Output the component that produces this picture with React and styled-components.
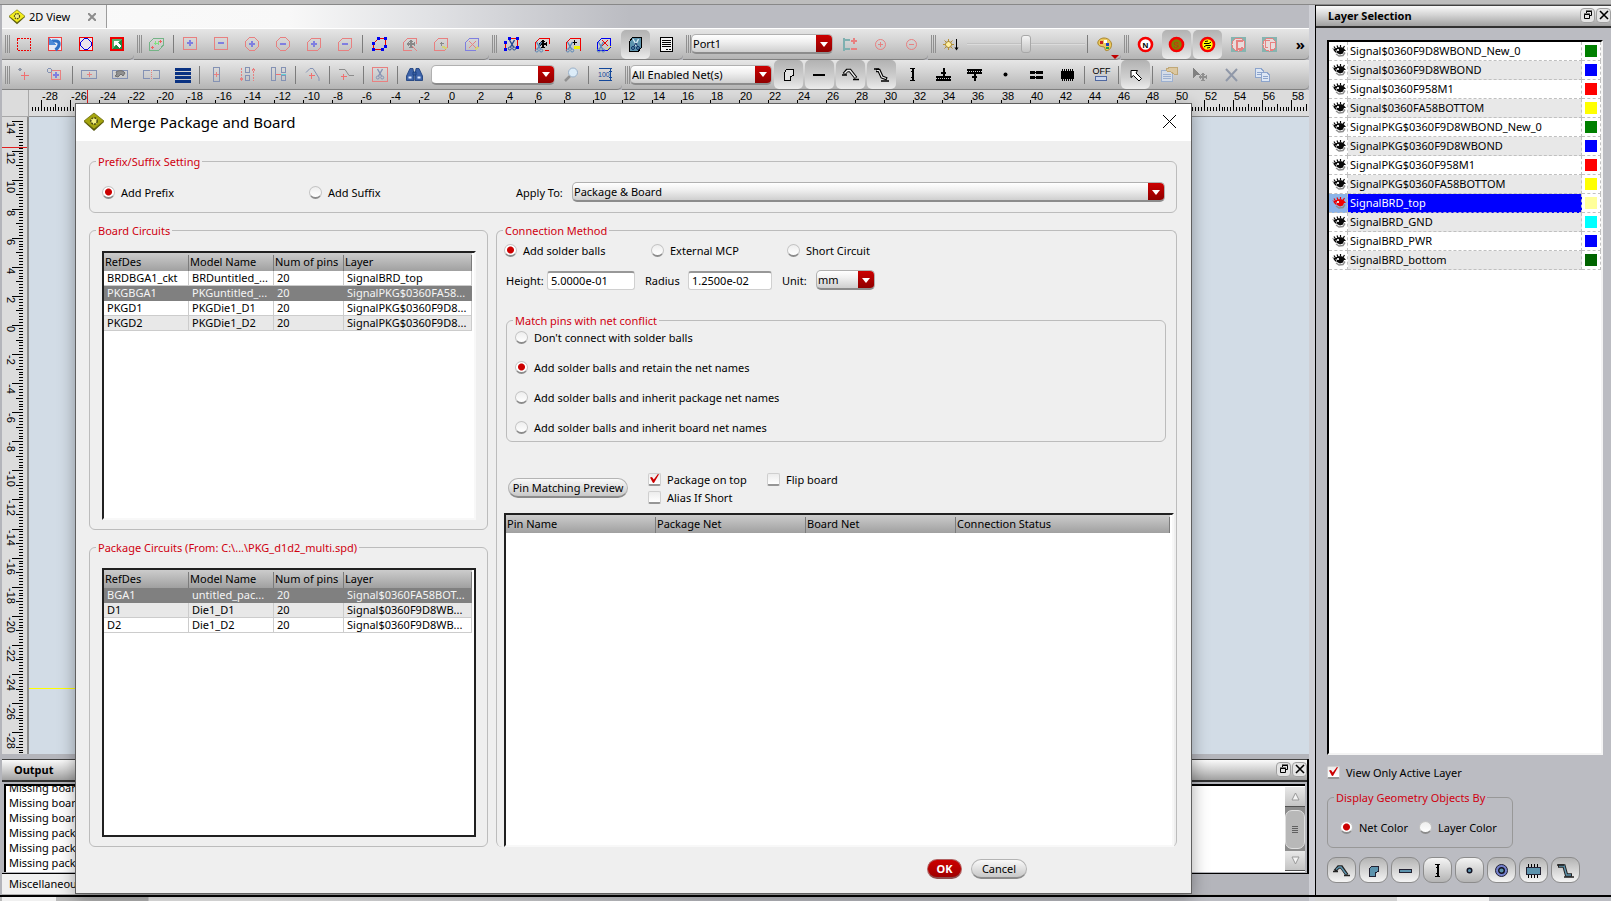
import React, { useState } from 'react';
import styled, { createGlobalStyle, css } from 'styled-components';

const RED = '#f00000';
const SOFT_RED = '#e88080';
const SOFT_BLUE = '#7f7fe0';
const STEEL = '#8492b4';
const TEAL = '#5c93ad';

const boardRows = [
    ['BRDBGA1_ckt', 'BRDuntitled_...', '20', 'SignalBRD_top'],
    ['PKGBGA1', 'PKGuntitled_...', '20', 'SignalPKG$0360FA58...'],
    ['PKGD1', 'PKGDie1_D1', '20', 'SignalPKG$0360F9D8...'],
    ['PKGD2', 'PKGDie1_D2', '20', 'SignalPKG$0360F9D8...'],
];

const packageRows = [
    ['BGA1', 'untitled_pac...', '20', 'Signal$0360FA58BOT...'],
    ['D1', 'Die1_D1', '20', 'Signal$0360F9D8WB...'],
    ['D2', 'Die1_D2', '20', 'Signal$0360F9D8WB...'],
];

const layers = [
    { name: 'Signal$0360F9D8WBOND_New_0', color: '#008000' },
    { name: 'Signal$0360F9D8WBOND', color: '#0000ff' },
    { name: 'Signal$0360F958M1', color: '#ff0000' },
    { name: 'Signal$0360FA58BOTTOM', color: '#ffff00' },
    { name: 'SignalPKG$0360F9D8WBOND_New_0', color: '#008000' },
    { name: 'SignalPKG$0360F9D8WBOND', color: '#0000ff' },
    { name: 'SignalPKG$0360F958M1', color: '#ff0000' },
    { name: 'SignalPKG$0360FA58BOTTOM', color: '#ffff00' },
    { name: 'SignalBRD_top', color: '#ffff99' },
    { name: 'SignalBRD_GND', color: '#00ffff' },
    { name: 'SignalBRD_PWR', color: '#0000ff' },
    { name: 'SignalBRD_bottom', color: '#006400' },
];

const messages = [
    'Missing board circuit',
    'Missing board circuit',
    'Missing board circuit',
    'Missing package circuit',
    'Missing package circuit',
    'Missing package circuit',
];

const conflictOptions = [
    "Don't connect with solder balls",
    'Add solder balls and retain the net names',
    'Add solder balls and inherit package net names',
    'Add solder balls and inherit board net names',
];

/* ---------- toolbar drawings, all on a 15 x 15 grid ---------- */

const CUT = 'M4.5 1.5H13.5V10.5L10.5 13.5H.5V5.5Z';
const OCTAGON = 'M4.5 .5H9.5L13.5 4.5V9.5L9.5 13.5H4.5L.5 9.5V4.5Z';

const Plus = ({ x = 7, y = 7, r = 3, c = SOFT_BLUE, w = 2 }) => (
    <path d={`M${x - r} ${y}H${x + r}M${x} ${y - r}V${y + r}`} stroke={c} strokeWidth={w} />
);
const Minus = () => <path d='M4 7H10' stroke={SOFT_BLUE} strokeWidth='2' />;
const Scissors = ({ c = '#244a90', x = 0, y = 0 }) => (
    <g transform={`translate(${x} ${y})`} stroke={c} fill='none' shapeRendering='auto'>
        <path d='M1.5 0L5.5 7M6.5 0L2.5 7' strokeWidth='1.4' />
        <circle cx='1.8' cy='8.5' r='1.5' />
        <circle cx='6.2' cy='8.5' r='1.5' />
    </g>
);
const MoveCross = ({ c, x = 8, y = 7 }) => (
    <g transform={`translate(${x} ${y})`}>
        <path d='M-4 0H4M0 -4V4' stroke={c} strokeWidth='2' />
        <path d='M-2 -3H2M-2 3H2M-3 -2V2M3 -2V2' stroke={c} />
    </g>
);
const Nodes = ({ points, c = '#0000f0' }) => points.map(([x, y]) => (
    <rect key={`${x}-${y}`} x={x - 1} y={y - 1} width='3' height='3' fill={c} />
));
const Ring = ({ fill, children }) => (
    <g shapeRendering='auto'>
        <circle cx='7.5' cy='7.5' r='6.5' fill={fill} stroke='#f60000' strokeWidth='2.6' />
        {children}
    </g>
);

const icons = {
    select: <rect x='.5' y='1.5' width='13' height='12' stroke={RED} strokeDasharray='2 1' />,
    undo: <>
        <rect x='.5' y='.5' width='13' height='13' fill='#e4e8f4' stroke='#f04040' />
        <path d='M4 4H8C12 4 12.5 9 7.5 13' stroke='#2f6fc4' strokeWidth='3' shapeRendering='auto' />
        <path d='M1 1V8H8Z' fill='#4d8ad8' />
    </>,
    circle: <>
        <rect x='.5' y='.5' width='13' height='13' fill='#ece4ec' stroke={RED} />
        <path d='M5.5 1.5H8.5L12.5 5.5V8.5L8.5 12.5H5.5L1.5 8.5V5.5Z' stroke='#0000e0' strokeWidth='1.2' />
    </>,
    fit: <>
        <rect x='1' y='1' width='12' height='12' fill='#1f8a44' stroke={RED} strokeWidth='2' />
        <path d='M2 2H12L2 12Z' fill='#55b070' />
        <path d='M4 4H9L7.5 5.500L11 9L9 11L5.500 7.500L4 9Z' fill='#fff' />
    </>,
    mesh: <>
        <path d='M4.5 1.5H14V8.5L9.5 13.5H.5V5.5Z' stroke='#74b486' />
        <path d='M5 6.5H10M6.5 4V8M9.5 4V8' stroke='#7fe07f' />
        <Plus x={3.5} y={10.5} r={1.5} w={1} c='#f06060' /><Plus x={11.5} y={4.5} r={1.5} w={1} c='#f06060' />
    </>,
    rectAdd: <><rect x='.5' y='.5' width='13' height='12' stroke={SOFT_RED} /><Plus y={6} /></>,
    rectSub: <><rect x='.5' y='.5' width='13' height='12' stroke={SOFT_RED} /><path d='M4 6H10' stroke={SOFT_BLUE} strokeWidth='2' /></>,
    circAdd: <><path d={OCTAGON} stroke={SOFT_RED} /><Plus /></>,
    circSub: <><path d={OCTAGON} stroke={SOFT_RED} /><Minus /></>,
    polyAdd: <><path d={CUT} stroke={SOFT_RED} /><Plus /></>,
    polySub: <><path d={CUT} stroke={SOFT_RED} /><Minus /></>,
    vertices: <>
        <path d='M2.5 5.5L6.5 1.5H13.5V10.5M10.5 12.5H1.5V7' stroke={RED} />
        <Nodes points={[[1, 6], [6, 1], [13, 1], [13, 9], [10, 12], [1, 12]]} />
    </>,
    polyMove: <><path d='M13.5 7V1.5H4.5L.5 5.5V13.5H9' stroke={SOFT_RED} /><MoveCross c='#888' /><path d='M9 9L14 14' stroke={SOFT_RED} /></>,
    polyPick: <>
        <path d={CUT} stroke={SOFT_RED} /><Plus r={2} w={1} c='#888' y={6.5} x={7.5} />
        <path d='M8 10L13 11' stroke='#d4d478' strokeWidth='2' />
    </>,
    polyDrop: <>
        <path d={CUT} stroke={SOFT_BLUE} /><path d='M4 4L11 11M11 4L4 11' stroke={SOFT_RED} shapeRendering='auto' />
        <path d='M10 13L13 10' stroke='#d4d478' strokeWidth='2' />
    </>,
    cutNodes: <>
        <path d='M1.5 13V5.5M5.5 1.5H13.5V12' stroke={RED} />
        <Nodes points={[[1, 5], [5, 1], [13, 1], [13, 10], [1, 12]]} />
        <Scissors x={4} y={3} />
    </>,
    cutMove: <><path d='M14 7V1.5H4.5L.5 5.5V13.5M14 13.5H10' stroke={RED} /><MoveCross c='#000' /><Scissors x={0} y={5} c='#5888b8' /></>,
    cutPick: <>
        <path d='M14 13.5V1.5H4.5L.5 5.5V13.5' stroke={RED} /><Plus r={2.5} w={1} c='#000' x={8.5} y={5.5} />
        <path d='M8 10H14' stroke='#f0f000' strokeWidth='3' /><Scissors x={0} y={5} c='#5888b8' />
    </>,
    cutDrop: <>
        <path d={CUT} stroke='#0000f0' /><path d='M5 3L11 9M11 3L5 9' stroke={RED} shapeRendering='auto' />
        <Scissors x={0} y={5} c='#5888b8' /><path d='M10 13L14 9' stroke='#f0f000' />
    </>,
    cutFill: <>
        <path d='M4.5 .5H13.5V10.5L10.5 14H1.5V4.5Z' fill={TEAL} stroke='#000' />
        <path d='M5 2L9 9M10.500 2L7 9' stroke='#d8ecf4' strokeWidth='1.400' shapeRendering='auto' />
        <g stroke='#0c2c60' shapeRendering='auto'><path d='M8 6L9.500 9.500M8 6L6 9.500' /><circle cx='5' cy='11' r='1.500' /><circle cx='10' cy='11' r='1.500' /></g>
    </>,
    doc: <>
        <rect x='1.5' y='.5' width='12' height='14' fill='#f4f4f4' stroke='#000' />
        <path d='M3 3.5H12M3 5.5H12M3 7.5H12M3 9.5H12M7 12.5H9M10 12.5H12' stroke='#000' />
    </>,
    portAdd: <>
        <path d='M2 1V14M2 3H8M2 12H8' stroke='#7fb0b0' strokeWidth='2' />
        <path d='M9 4H15M12 1V7M9 12H15' stroke={SOFT_RED} strokeWidth='2' />
    </>,
    ringAdd: <g shapeRendering='auto'><circle cx='7.5' cy='7.5' r='5' stroke={SOFT_RED} /><Plus x={7.5} y={7.5} r={2.5} w={1} c={SOFT_RED} /></g>,
    ringSub: <g shapeRendering='auto'><circle cx='7.5' cy='7.5' r='5' stroke={SOFT_RED} /><path d='M5 7.5H10' stroke={SOFT_RED} /></g>,
    sun: <g shapeRendering='auto'>
        <path d='M5.5 2V13M0 7.5H11M1.5 3.5L9.5 11.5M9.5 3.5L1.5 11.5' stroke='#b89030' />
        <circle cx='5.5' cy='7.5' r='3' fill='#fff0a0' stroke='#a08030' />
        <path d='M13.5 2V12' stroke='#000' /><path d='M11.500 10.500H15.500L13.500 13.500Z' fill='#000' />
    </g>,
    palette: <g shapeRendering='auto'>
        <path d='M7 1C12 1 15 5 14.5 8.5C14 12 11 14 9 13.5C7 13 9 10.5 7 10C4 9.5 1 9 .8 6C.8 3 4 1 7 1Z' fill='#ecc95c' stroke='#a8842c' />
        <rect x='3' y='4' width='3' height='3' fill='#c82020' /><rect x='7' y='3' width='3' height='3' fill='#fff' />
        <rect x='9' y='6' width='3' height='3' fill='#2040c0' /><rect x='9' y='10' width='3' height='2' fill='#20a040' />
    </g>,
    ringN: <Ring fill='#fff'><text x='7.5' y='10.5' fontSize='8' fontWeight='700' textAnchor='middle' fill='#000'>N</text></Ring>,
    ringS: <Ring fill='#808000'><text x='7.5' y='11' fontSize='9' fontWeight='700' textAnchor='middle' fill='#c04010'>S</text></Ring>,
    ringSwap: <Ring fill='#ffff00'><path d='M4 6.5H9L11 5M5 4.5L8 4M4 10L6 8.5H11M7 11L10 10.5' stroke='#000' /></Ring>,
    netC: <>
        <rect width='15' height='15' fill='#86b4b0' /><circle cx='7.5' cy='7.5' r='6.5' fill='#e8dcdc' stroke={SOFT_RED} />
        <path d='M10.5 5V3.5H5.5V11.5H10.5V10' stroke={SOFT_RED} strokeWidth='2' />
    </>,
    netCC: <>
        <rect width='15' height='15' fill='#86b4b0' /><circle cx='7.5' cy='7.5' r='6.5' fill='#e8dcdc' stroke={SOFT_RED} />
        <path d='M7.5 3.5H3.5V10.5H6M12 6V5.5H8.5V12.5H12V11' stroke={SOFT_RED} />
    </>,
    nodeAdd: <><path d='M3 0L5 2.5L3 5L.5 2.5Z' fill='#9098a8' /><Plus x={7.5} y={8.5} r={4} w={1} c='#f07070' /></>,
    nodeRect: <>
        <circle cx='1.5' cy='3.5' r='2' stroke={STEEL} /><path d='M4 3.500H12.5V12.5H3.500V5' stroke={SOFT_RED} />
        <Plus x={8} y={8} r={3} />
    </>,
    wideAdd: <><rect x='-.5' y='3.5' width='15' height='8' stroke={STEEL} /><Plus x={7.5} y={7.5} r={2.5} w={1} c={SOFT_RED} /></>,
    wideGrab: <>
        <rect x='-.5' y='3.5' width='15' height='8' stroke={STEEL} />
        <path d='M3 5C6 3 10 3 12 6L10 9L8 7L5 10L2 9L4 7Z' fill='#909090' stroke='#707070' shapeRendering='auto' />
    </>,
    wideSplit: <><path d='M6 3.5H-.5V11.5H6M9 3.5H15V11.5H9' stroke={STEEL} /><path d='M7.5 3V12' stroke={SOFT_RED} strokeDasharray='1 1' /></>,
    stripes: <path d='M-.5 2H15.5M-.5 6H15.5M-.5 10H15.5M-.5 14H15.5' stroke='#0a3282' strokeWidth='3' />,
    tallAdd: <><rect x='4.5' y='.5' width='6' height='14' stroke={STEEL} /><Plus x={7.5} y={7.5} r={2.5} w={1} c={SOFT_RED} /></>,
    tallArrows: <>
        <rect x='5.5' y='.5' width='4' height='5' stroke={STEEL} /><rect x='5.5' y='8.5' width='4' height='5' stroke={STEEL} />
        <path d='M1.5 1V14M13.5 1V14' stroke={SOFT_RED} strokeDasharray='2 1' />
        <path d='M0 11L1.5 13.5L3 11M12 4L13.5 1.5L15 4' stroke={SOFT_RED} />
    </>,
    tallAlign: <>
        <rect x='.5' y='.5' width='4' height='13' stroke={STEEL} /><rect x='10.5' y='.5' width='4' height='5' stroke={STEEL} />
        <rect x='10.5' y='8.5' width='4' height='5' stroke={STEEL} /><path d='M5 7.5H10' stroke='#f07070' /><path d='M10 7H15' stroke='#60d0d8' />
    </>,
    arcAdd: <><path d='M1 5.5L5 1.5H8L14 11V14' stroke={STEEL} shapeRendering='auto' /><Plus x={6.5} y={8.5} r={3} w={1} c='#f07070' /></>,
    stepAdd: <><path d='M0 2.5H6L10 8.5H15' stroke='#8c8c8c' shapeRendering='auto' /><Plus x={4.5} y={9.5} r={3} w={1} c='#f07070' /></>,
    cutBox: <><rect x='-.5' y='.5' width='15' height='14' stroke={SOFT_RED} /><Scissors x={3} y={2} c={STEEL} /></>,
    find: <g fill='#3c62a8' stroke='#153a7a' strokeWidth='.8' shapeRendering='auto'>
        <path d='M3 1.500H6L7 8V13.500H-.500V9Z' /><path d='M9 1.500H12L15.500 9V13.500H8V8Z' /><path d='M6 5H9V8H6Z' />
        <path d='M1.500 10.500H4.500M10.500 10.500H13.500' stroke='#e0ecff' strokeWidth='2' />
    </g>,
    zoom: <g shapeRendering='auto'><path d='M6 9L1 14' stroke='#909090' strokeWidth='2.5' /><circle cx='9' cy='5.5' r='4.5' fill='#dcecf8' stroke='#9ab0c8' /></g>,
    ruler100: <>
        <path d='M1 1.5H14M1 13.5H14M12.5 2V13' stroke='#14489a' /><path d='M11 4.5H14M11 10.5H14' stroke='#14489a' />
        <text x='0' y='10' fontSize='7' fill='#14489a'>100</text>
    </>,
    poly: <path d='M5.500 2.5H12.5V8.5L9.500 9.500V13.5H3.5V5.5Z' stroke='#000' fill='#e4e4e4' />,
    line: <path d='M1 8H13' stroke='#000' strokeWidth='2' />,
    arc: <g shapeRendering='auto'>
        <path d='M1 7L4 3.5H7L13 11' stroke='#000' strokeWidth='3.4' /><path d='M1.5 6.5L4.5 3.5H7L12.5 10.5' stroke='#eee' strokeWidth='1.4' />
        <path d='M-1 8H4M10 12.5H16' stroke='#000' strokeWidth='1.6' />
    </g>,
    step: <g shapeRendering='auto'>
        <path d='M2 3.5H5L8 10L13 12' stroke='#000' strokeWidth='3.4' /><path d='M2.5 3.5H5L8 10L12 11.5' stroke='#eee' strokeWidth='1.2' />
        <path d='M0 2H5M7 14H15' stroke='#000' strokeWidth='1.6' />
    </g>,
    beam: <>
        <path d='M5 1.5H10M5 13.5H10M6 4.5H9M6 10.5H9' stroke='#000' /><path d='M7.5 1V14' stroke='#000' strokeWidth='2' />
    </>,
    padUp: <>
        <path d='M0 9.500H15M0 12.500H15M5 5.500H10' stroke='#000' strokeWidth='2' /><path d='M7.500 1V9' stroke='#000' strokeWidth='2' />
        <path d='M1 11H15' stroke='#000' strokeDasharray='1 1' />
    </>,
    padDown: <>
        <path d='M0 2.500H15M0 5.500H15M5 9.500H10' stroke='#000' strokeWidth='2' /><path d='M7.500 6V14' stroke='#000' strokeWidth='2' />
        <path d='M1 4H15' stroke='#000' strokeDasharray='1 1' />
    </>,
    dot: <circle cx='7.5' cy='7.5' r='2' fill='#000' shapeRendering='auto' />,
    pads: <><path d='M1 5H6M1 10H6M7 5H14M7 10H14' stroke='#000' strokeWidth='3' /><path d='M3 5H7M3 10H7' stroke='#000' /></>,
    chip: <><rect x='1' y='4' width='13' height='8' fill='#000' /><path d='M2 3H14M2 13H14' stroke='#000' strokeWidth='2' strokeDasharray='1 1' /></>,
    off: <>
        <text x='7.5' y='7' fontSize='9' textAnchor='middle' fill='#000'>OFF</text>
        <rect x='1.500' y='9.5' width='11' height='4' fill='#c8d4ec' stroke='#5068a0' />
    </>,
    pointer: <path d='M3 3.500H9.5L8 6L13.5 11.5L11 14L5.5 8.5L3 10.5Z' fill='#fff' stroke='#000' shapeRendering='auto' />,
    props: <>
        <rect x='-.5' y='3.5' width='11' height='11' fill='#d4dce8' stroke='#9cb0d0' /><path d='M1 7.5H9M1 9.5H9M1 11.5H9' stroke='#9cb0d0' />
        <path d='M4 2L9 0H15V7H12L8 4H5Z' fill='#dcc8a0' stroke='#c0a878' />
    </>,
    pointMove: <><path d='M0 1L7 8H3L0 11Z' fill='#808080' /><MoveCross x={10} y={10} c='#909090' /></>,
    del: <path d='M2 2L13 14M13 2L2 14' stroke='#9098a8' strokeWidth='2' shapeRendering='auto' />,
    copy: <>
        <path d='M.5 1.5H6L8.5 4V10.5H.5Z' fill='#dce6f4' stroke='#8ca4cc' /><path d='M6.5 5.5H12L14.5 8V14.5H6.5Z' fill='#dce6f4' stroke='#8ca4cc' />
        <path d='M2 5.5H6M2 7.5H6M8 9.5H13M8 11.5H13' stroke='#8ca4cc' />
    </>,
    layArc: <g shapeRendering='auto'>
        <path d='M1 8L4.5 4H7.5L13 12' stroke='#222' strokeWidth='3.4' /><path d='M2 6.5L5 4H7L12.5 11.5' stroke={TEAL} strokeWidth='1.4' />
        <path d='M-1 8.5H4M10 12.5H16' stroke='#222' strokeWidth='1.600' />
    </g>,
    layPoly: <path d='M5.5 3.5H12.5V8.5L9 9.5V13.5H3.5V5.5Z' fill={TEAL} stroke='#223' />,
    layLine: <rect x='1.5' y='6.5' width='12' height='3' fill={TEAL} stroke='#223' />,
    layDot: <circle cx='7.5' cy='7.5' r='2.3' fill={TEAL} stroke='#112' strokeWidth='1.4' shapeRendering='auto' />,
    layRing: <g shapeRendering='auto'><circle cx='7.5' cy='7.5' r='6' fill='#7480cc' stroke='#223' /><circle cx='7.5' cy='7.5' r='2.8' fill={TEAL} stroke='#112' strokeWidth='1.4' /></g>,
    layChip: <><path d='M2 2.5H14M2 13.5H14' stroke='#000' strokeWidth='3' strokeDasharray='1 2' /><rect x='.5' y='4.5' width='14' height='7' fill={TEAL} stroke='#223' /></>,
    layStep: <g shapeRendering='auto'>
        <path d='M0 3H6L8.5 12H14' stroke='#222' strokeWidth='3.4' /><path d='M1 3H6L8.5 12H13' stroke={TEAL} strokeWidth='1.4' />
        <path d='M-1 2H6M6 14H16' stroke='#222' strokeWidth='1.600' />
    </g>,
};

const Icon = ({ name }) => (
    <svg width='15' height='15' viewBox='0 0 15 15' fill='none' overflow='visible' shapeRendering='crispEdges' aria-hidden='true'>
        {icons[name]}
    </svg>
);

const Gem = ({ size = 20, bright }) => (
    <svg width={size} height={size} viewBox='0 0 20 20' aria-hidden='true'>
        <path d='M0 10L10 2L20 10L10 19Z' fill='#55560a' />
        <path d='M0 9L10 1L20 9L10 17Z' fill={bright ? '#f4ee1c' : '#a5a50e'} stroke='#6c6c10' strokeWidth='.8' />
        <circle cx='10' cy='9' r='3.2' fill='#f4f080' stroke='#4a4a10' strokeWidth='1.5' strokeDasharray='2 1' />
    </svg>
);

const Eye = ({ active }) => {
    const ink = active ? '#f00000' : '#0a0a0a';
    return (
        <svg width='14' height='12' viewBox='0 0 14 12' fill='none' aria-hidden='true'>
            <path d='M0 3.5L3 4C5 2 10 1.500 12 3.500L14 6L12 6L11 8.500L8 9.500L5 8L5 5.500L3 5.500Z' fill={ink} />
            <path d='M3.500 4L2 1.500M6 3L5 .5M8.500 2.500V0M11 3.500L12.500 1' stroke={ink} strokeWidth='1.200' />
            <path d='M2 5L4.500 7.500' stroke={ink} strokeWidth='1.200' />
            <rect x='5' y='4' width='2' height='2' fill='#e0e0e0' />
            <path d='M4 9L7 11L11 10.500L13 7.500' stroke='#8c8c8c' strokeWidth='1.400' />
        </svg>
    );
};

/* ---------- rulers ---------- */

const STEP = 14.54;
const ticksFrom = (from, to) => {
    const out = [];
    for (let i = from * 5; i <= to * 5; i++) out.push(i);
    return out;
};
const tickSize = (i) => (i % 10 === 0 ? 11 : i % 5 === 0 ? 7 : 4);

const TopRuler = () => (
    <TopRulerBox>
        <svg width='100%' height='26' shapeRendering='crispEdges' aria-hidden='true'>
            {ticksFrom(-29, 64).filter((i) => i > -144).map((i) => {
                const x = Math.round(418 + (i * STEP) / 5);
                return <path key={i} d={`M${x + 0.5} 21V${21 - tickSize(i)}`} stroke='#000' />;
            })}
            {ticksFrom(-28, 58).filter((i) => i % 10 === 0).map((i) => (
                <RulerText key={i} x={419 + Math.round((i * STEP) / 5)} y='10'>{i / 5}</RulerText>
            ))}
            <path d='M57.5 0V26' stroke='#e02020' />
        </svg>
    </TopRulerBox>
);

const SideRuler = () => (
    <SideRulerBox>
        <svg width='26' height='100%' shapeRendering='crispEdges' aria-hidden='true'>
            {ticksFrom(-42, 14).map((i) => {
                const y = Math.round(208 - (i * STEP) / 5);
                return <path key={i} d={`M21 ${y + 0.5}H${21 - tickSize(i)}`} stroke='#000' />;
            })}
            {ticksFrom(-28, 14).filter((i) => i % 10 === 0).map((i) => (
                <RulerText key={i} transform={`translate(5 ${209 - Math.round((i * STEP) / 5)}) rotate(90)`}>{i / 5}</RulerText>
            ))}
            <path d='M0 30.5H26' stroke='#e02020' />
        </svg>
    </SideRulerBox>
);

/* ---------- small parts ---------- */

const Tools = ({ names, pressed = [] }) => names.map((name, i) => (
    name === '|'
        ? <Divider key={i} />
        : <ToolButton key={i} $pressed={pressed.includes(name)} aria-label={name}><Icon name={name} /></ToolButton>
));

const Combo = ({ label, value, width, plain }) => (
    <ComboBox $width={width} $plain={plain}>
        <select aria-label={label} defaultValue={value}>
            <option>{value}</option>
        </select>
        <ComboArrow><svg width='8' height='5' aria-hidden='true'><path d='M0 0H8L4 5Z' fill='#fff' /></svg></ComboArrow>
    </ComboBox>
);

const Choice = ({ name, label, checked, onChange }) => (
    <ChoiceLabel>
        <Radio type='radio' name={name} checked={checked} onChange={onChange} />
        {label}
    </ChoiceLabel>
);

const Tick = ({ label, defaultChecked }) => (
    <ChoiceLabel>
        <Check type='checkbox' defaultChecked={defaultChecked} />
        {label}
    </ChoiceLabel>
);

const PaneButtons = () => (
    <PaneActions>
        <PaneButton aria-label='Float'>
            <svg width='10' height='10' fill='none' stroke='#000' aria-hidden='true'>
                <path d='M3.5 3V1.5H8.5V5.5H7M3 1H9' /><path d='M1.5 4.5H6.5V8.5H1.5ZM1 4H7' />
            </svg>
        </PaneButton>
        <PaneButton aria-label='Close'>
            <svg width='10' height='10' fill='none' stroke='#000' strokeWidth='1.6' aria-hidden='true'><path d='M1 1L9 9M9 1L1 9' /></svg>
        </PaneButton>
    </PaneActions>
);

const CircuitTable = ({ rows, selected, sunken }) => (
    <TableFrame $sunken={sunken}>
        <Table>
            <colgroup><col width='85' /><col width='85' /><col width='70' /><col /></colgroup>
            <thead>
                <tr><th>RefDes</th><th>Model Name</th><th>Num of pins</th><th>Layer</th></tr>
            </thead>
            <tbody>
                {rows.map((row, r) => (
                    <CircuitRow key={row[0]} $selected={r === selected} $shaded={r % 2 === 1}>
                        {row.map((cell, c) => <td key={c}>{cell}</td>)}
                    </CircuitRow>
                ))}
            </tbody>
        </Table>
    </TableFrame>
);

const MergeDialog = () => {
    const [affix, setAffix] = useState('Add Prefix');
    const [method, setMethod] = useState('Add solder balls');
    const [conflict, setConflict] = useState(conflictOptions[1]);

    return (
        <Dialog role='dialog' aria-label='Merge Package and Board'>
            <DialogTitle>
                <Gem />
                <h1>Merge Package and Board</h1>
                <CloseButton aria-label='Close'>
                    <svg width='13' height='13' stroke='#000' aria-hidden='true'><path d='M0 0L13 13M13 0L0 13' /></svg>
                </CloseButton>
            </DialogTitle>
            <DialogBody>
                <Group>
                    <legend>Prefix/Suffix Setting</legend>
                    <AffixRow>
                        {['Add Prefix', 'Add Suffix'].map((label) => (
                            <Choice key={label} name='affix' label={label} checked={affix === label} onChange={() => setAffix(label)} />
                        ))}
                        <ApplyTo>
                            <span>Apply To:</span>
                            <Combo label='Apply To' value='Package & Board' />
                        </ApplyTo>
                    </AffixRow>
                </Group>
                <Columns>
                    <LeftColumn>
                        <Group>
                            <legend>Board Circuits</legend>
                            <TablePad><CircuitTable rows={boardRows} selected={1} sunken /></TablePad>
                        </Group>
                        <Group>
                            <legend>Package Circuits (From: C:\...\PKG_d1d2_multi.spd)</legend>
                            <TablePad><CircuitTable rows={packageRows} selected={0} /></TablePad>
                        </Group>
                    </LeftColumn>
                    <ConnectionGroup>
                        <legend>Connection Method</legend>
                        <MethodRow>
                            {['Add solder balls', 'External MCP', 'Short Circuit'].map((label) => (
                                <Choice key={label} name='method' label={label} checked={method === label} onChange={() => setMethod(label)} />
                            ))}
                        </MethodRow>
                        <SizeRow>
                            <SizeField $label={41}><span>Height:</span><TextInput defaultValue='5.0000e-01' $width={88} /></SizeField>
                            <SizeField $label={43}><span>Radius</span><TextInput defaultValue='1.2500e-02' $width={84} /></SizeField>
                            <SizeField $label={34}><span>Unit:</span><Combo label='Unit' value='mm' width={59} /></SizeField>
                        </SizeRow>
                        <ConflictGroup>
                            <legend>Match pins with net conflict</legend>
                            <ConflictList>
                                {conflictOptions.map((label) => (
                                    <Choice key={label} name='conflict' label={label} checked={conflict === label} onChange={() => setConflict(label)} />
                                ))}
                            </ConflictList>
                        </ConflictGroup>
                        <PreviewRow>
                            <PushButton $width={120}>Pin Matching Preview</PushButton>
                            <TickGrid>
                                <Tick label='Package on top' defaultChecked />
                                <Tick label='Flip board' />
                                <Tick label='Alias If Short' />
                            </TickGrid>
                        </PreviewRow>
                        <PinFrame $sunken>
                            <Table>
                                <colgroup><col width='150' /><col width='150' /><col width='150' /><col /></colgroup>
                                <thead>
                                    <tr><th>Pin Name</th><th>Package Net</th><th>Board Net</th><th>Connection Status</th></tr>
                                </thead>
                            </Table>
                        </PinFrame>
                    </ConnectionGroup>
                </Columns>
            </DialogBody>
            <DialogFooter>
                <PushButton $primary $width={35}>OK</PushButton>
                <PushButton $width={56}>Cancel</PushButton>
            </DialogFooter>
        </Dialog>
    );
};

const LayerPane = () => {
    const [active, setActive] = useState('SignalBRD_top');
    const [colorBy, setColorBy] = useState('Net Color');
    return (
        <SidePane>
            <PaneTitle><h2>Layer Selection</h2><PaneButtons /></PaneTitle>
            <SideBody>
                <LayerList>
                    <tbody>
                        {layers.map((layer, i) => (
                            <LayerRow key={layer.name} $shaded={i % 2 === 1} $active={layer.name === active} onClick={() => setActive(layer.name)}>
                                <td><Eye active={layer.name === active} /></td>
                                <td>{layer.name}</td>
                                <td><Swatch $color={layer.color} /></td>
                            </LayerRow>
                        ))}
                    </tbody>
                </LayerList>
                <ActiveOnly><Tick label='View Only Active Layer' defaultChecked /></ActiveOnly>
                <ColorGroup>
                    <legend>Display Geometry Objects By</legend>
                    <ColorRow>
                        {['Net Color', 'Layer Color'].map((label) => (
                            <Choice key={label} name='colorBy' label={label} checked={colorBy === label} onChange={() => setColorBy(label)} />
                        ))}
                    </ColorRow>
                </ColorGroup>
                <ShapeButtons>
                    {['layArc', 'layPoly', 'layLine', 'beam', 'layDot', 'layRing', 'layChip', 'layStep'].map((name) => (
                        <ShapeButton key={name} $raised={name === 'beam' || name === 'layDot'} aria-label={name}><Icon name={name} /></ShapeButton>
                    ))}
                </ShapeButtons>
            </SideBody>
        </SidePane>
    );
};

function App() {
    return (
        <>
            <GlobalStyle />
            <Screen>
                <TopStrip />
                <Workspace>
                    <MainColumn>
                        <TabBar>
                            <ViewTab><Gem size={16} bright />2D View<TabClose aria-label='Close tab'>
                                <svg width='8' height='8' stroke='#8c8c8c' strokeWidth='2' aria-hidden='true'><path d='M0 0L8 8M8 0L0 8' /></svg>
                            </TabClose></ViewTab>
                        </TabBar>
                        <Toolbar>
                            <ToolGroup><Handle /><ToolItems><Tools names={['select', 'undo', 'circle', 'fit']} /></ToolItems></ToolGroup>
                            <ToolGroup><Handle /><ToolItems>
                                <Tools names={['mesh', '|', 'rectAdd', 'rectSub', 'circAdd', 'circSub', 'polyAdd', 'polySub', '|', 'vertices', 'polyMove', 'polyPick', 'polyDrop']} />
                            </ToolItems></ToolGroup>
                            <ToolGroup><Handle /><ToolItems>
                                <Tools names={['cutNodes', 'cutMove', 'cutPick', 'cutDrop', 'cutFill', 'doc']} pressed={['cutFill']} />
                            </ToolItems></ToolGroup>
                            <ToolGroup><Handle /><ToolItems>
                                <Combo label='Port' value='Port1' width={142} />
                                <Tools names={['portAdd', 'ringAdd', 'ringSub']} />
                            </ToolItems></ToolGroup>
                            <ToolGroup><Handle /><ToolItems>
                                <Tools names={['sun']} />
                                <Slider type='range' aria-label='Brightness' defaultValue='50' />
                                <Divider />
                                <PaletteButton aria-label='palette'><Icon name='palette' /></PaletteButton>
                            </ToolItems></ToolGroup>
                            <ToolGroup $fill><Handle $wide /><ToolItems>
                                <Tools names={['ringN', 'ringS', 'ringSwap', 'netC', 'netCC']} pressed={['ringS', 'ringSwap']} />
                            </ToolItems><More>»</More></ToolGroup>
                        </Toolbar>
                        <Toolbar>
                            <ToolGroup><Handle /><ToolItems>
                                <Tools names={['nodeAdd', 'nodeRect', '|', 'wideAdd', 'wideGrab', 'wideSplit', 'stripes', '|', 'tallAdd', 'tallArrows', 'tallAlign', '|', 'arcAdd', '|', 'stepAdd', '|', 'cutBox', '|', 'find']} />
                                <Combo label='Find' value='' width={124} plain />
                                <Tools names={['zoom', '|', 'ruler100']} />
                            </ToolItems></ToolGroup>
                            <ToolGroup $fill><Handle /><ToolItems>
                                <Combo label='Nets' value='All Enabled Net(s)' width={142} />
                                <Tools
                                    names={['poly', 'line', 'arc', 'step', 'beam', 'padUp', 'padDown', 'dot', 'pads', 'chip', '|', 'off', '|', 'pointer', '|', 'props', 'pointMove', 'del', 'copy']}
                                    pressed={['poly', 'line', 'arc', 'step', 'pointer']}
                                />
                            </ToolItems></ToolGroup>
                        </Toolbar>
                        <CanvasGrid>
                            <Corner />
                            <TopRuler />
                            <SideRuler />
                            <Canvas>
                                <svg width='100%' height='100%' shapeRendering='crispEdges' aria-hidden='true'><path d='M0 571.5H700' stroke='#ffff00' /></svg>
                            </Canvas>
                        </CanvasGrid>
                        <OutputPane>
                            <PaneTitle><h2>Output</h2><PaneButtons /></PaneTitle>
                            <OutputBody>
                                <Messages>
                                    {messages.map((text, i) => <li key={i}>{text}</li>)}
                                </Messages>
                                <ScrollBar>
                                    <ScrollButton aria-label='Scroll up'><svg width='9' height='9' aria-hidden='true'><path d='M4.5 1L8 8H1Z' fill='#f4f4f4' stroke='#999' /></svg></ScrollButton>
                                    <ScrollTrack><ScrollThumb><i /><i /><i /><i /></ScrollThumb></ScrollTrack>
                                    <ScrollButton aria-label='Scroll down'><svg width='9' height='9' aria-hidden='true'><path d='M1 1H8L4.5 8Z' fill='#f4f4f4' stroke='#999' /></svg></ScrollButton>
                                </ScrollBar>
                            </OutputBody>
                        </OutputPane>
                        <OutputTabs><span>Miscellaneous</span></OutputTabs>
                    </MainColumn>
                    <LayerPane />
                </Workspace>
                <BottomStrip>
                    <BottomMain><i /><i /></BottomMain>
                    <BottomSide><i /><i /></BottomSide>
                </BottomStrip>
                <MergeDialog />
            </Screen>
        </>
    );
}

export default App;

const GlobalStyle = createGlobalStyle`
    *{
        box-sizing: border-box;
    }
    body{
        margin: 0;
        overflow: hidden;
    }
    body, button, input, select{
        font-family: 'Noto Sans', 'Open Sans', sans-serif;
        font-size: 11px;
        line-height: 15px;
        color: #000000;
    }
    button{
        padding: 0;
        border: 0;
        background: none;
    }
    h1, h2, ul{
        margin: 0;
        padding: 0;
        list-style: none;
    }
    svg{
        display: block;
        flex: none;
    }
    svg text{
        font-family: 'Liberation Sans', sans-serif;
    }
`

const metal = css`
    background: linear-gradient(#e6e6e6, #d4d4d4 40%, #b4b4b4);
`

const Screen = styled.div`
    position: relative;
    display: flex;
    flex-direction: column;
    height: 100vh;
    background-color: #bbbcc2;
    overflow: hidden;
`

const TopStrip = styled.div`
    flex: none;
    height: 5px;
    background-color: #bdbdbd;
    border-bottom: 1px solid #888888;
`

const Workspace = styled.div`
    flex: 1;
    min-height: 0;
    display: flex;
    gap: 6px;
    background-color: #cfd0d6;
`

const MainColumn = styled.main`
    flex: 1;
    min-width: 0;
    display: flex;
    flex-direction: column;
    padding-left: 2px;
    background-color: #b4b5bb;
`

const TabBar = styled.div`
    display: flex;
    height: 24px;
    border-bottom: 1px solid #ffffff;
    background: linear-gradient(90deg, #fafafa, #f8f8f8 22%, #e0e1e4 33%, #bbbcc2 48%);
`

const ViewTab = styled.div`
    display: flex;
    align-items: center;
    gap: 4px;
    width: 105px;
    padding: 0 10px 0 7px;
    border-right: 1px solid #9c9c9c;
    background-color: #f0f0f0;
`

const TabClose = styled.button`
    margin-left: auto;
`

const Toolbar = styled.div`
    display: flex;
    height: 31px;
    & + &{
        height: 30px;
    }
`

const ToolGroup = styled.div`
    display: flex;
    flex: ${({ $fill }) => ($fill ? 1 : 'none')};
    align-items: center;
    padding: 0 2px 0 3px;
    border-bottom: 1px solid #808080;
    border-radius: 0 0 5px 0;
    ${metal}
`

const Handle = styled.div`
    width: ${({ $wide }) => ($wide ? '7px' : '5px')};
    height: 18px;
    background: repeating-linear-gradient(90deg, #909090 0 1px, transparent 1px 2px) no-repeat;
    background-size: 5px 100%;
`

const ToolItems = styled.div`
    display: flex;
    align-items: center;
    gap: 2px;
`

const ToolButton = styled.button`
    display: grid;
    place-items: center;
    width: 29px;
    height: 29px;
    border-radius: 5px;
    ${({ $pressed }) => $pressed && css`
        background: linear-gradient(#b2b2b2, #cfcfcf 60%, #ececec);
    `}
`

const PaletteButton = styled(ToolButton)`
    position: relative;
    &::after{
        content: '';
        position: absolute;
        right: 0;
        bottom: 0;
        border: 4px solid transparent;
        border-top-color: #c00000;
        border-bottom: 0;
    }
`

const Divider = styled.div`
    width: 1px;
    height: 18px;
    background-color: #7c7c7c;
`

const More = styled.button`
    margin-left: auto;
    padding-right: 2px;
    font-size: 15px;
    font-weight: 700;
`

const Slider = styled.input`
    appearance: none;
    width: 118px;
    height: 18px;
    margin: 0;
    background: linear-gradient(#b4b4b4, #e8e8e8) center / 100% 2px no-repeat;
    &::-webkit-slider-thumb{
        appearance: none;
        width: 10px;
        height: 18px;
        border: 1px solid #a8a8a8;
        border-radius: 3px;
        background: linear-gradient(#f4f4f4, #c4c4c4);
    }
`

const ComboBox = styled.span`
    position: relative;
    display: flex;
    flex: ${({ $width }) => ($width ? 'none' : 1)};
    width: ${({ $width }) => ($width ? `${$width}px` : 'auto')};
    height: 20px;
    border: 1px solid #b0b0b0;
    border-bottom: 2px solid #8c8c8c;
    border-radius: 5px;
    background: ${({ $plain }) => ($plain ? '#ffffff' : 'linear-gradient(#ffffff, #f0f0f0 40%, #cfcfcf)')};
    overflow: hidden;
    select{
        appearance: none;
        width: 100%;
        padding: 0 18px 0 1px;
        border: 0;
        background: none;
        outline: none;
    }
`

const ComboArrow = styled.span`
    position: absolute;
    top: 0;
    right: 0;
    display: grid;
    place-items: center;
    width: 16px;
    height: 18px;
    background: linear-gradient(#cc0000, #8c0000);
    pointer-events: none;
`

const CanvasGrid = styled.div`
    flex: 1;
    min-height: 0;
    display: grid;
    grid-template: 27px minmax(0, 1fr) / 27px minmax(0, 1fr);
`

const Corner = styled.div`
    background-color: #dcdcdc;
    border-bottom: 1px solid #a8a8a8;
    border-right: 1px solid #a8a8a8;
`

const TopRulerBox = styled.div`
    padding-left: 1px;
    background-color: #dcdcdc;
    border-bottom: 1px solid #8c8c8c;
    overflow: hidden;
`

const SideRulerBox = styled.div`
    background-color: #dcdcdc;
    border-right: 2px solid #8c8c8c;
    overflow: hidden;
`

const RulerText = styled.text`
    font-size: 11px;
    fill: #000000;
`

const Canvas = styled.div`
    background-color: #d2dce6;
    overflow: hidden;
`

const OutputPane = styled.section`
    margin-top: 5px;
    height: 115px;
    display: flex;
    flex-direction: column;
    border-right: 2px solid #000000;
    border-bottom: 1px solid #000000;
`

const PaneTitle = styled.header`
    display: flex;
    align-items: center;
    flex: none;
    height: 23px;
    padding: 0 0 2px 12px;
    border-top: 1px solid #404040;
    border-bottom: 2px solid #303030;
    background: linear-gradient(#fafafa, #d4d4d4 45%, #a0a0a0);
    h2{
        font-size: 11px;
        font-weight: 700;
    }
`

const PaneActions = styled.div`
    display: flex;
    gap: 1px;
    margin-left: auto;
`

const PaneButton = styled.button`
    display: grid;
    place-items: center;
    width: 15px;
    height: 15px;
    border: 1px solid #a0a0a0;
    border-radius: 4px;
    background-color: #e4e4e4;
`

const OutputBody = styled.div`
    flex: 1;
    min-height: 0;
    display: flex;
    margin: 2px 2px 1px;
    border-top: 2px solid #000000;
    border-left: 2px solid #000000;
    background-color: #ffffff;
`

const Messages = styled.ul`
    flex: 1;
    display: flex;
    flex-direction: column;
    justify-content: flex-end;
    padding: 0 0 2px 3px;
    overflow: hidden;
    li{
        flex: none;
        line-height: 15px;
    }
`

const ScrollBar = styled.div`
    display: flex;
    flex-direction: column;
    width: 20px;
    padding: 1px 0;
`

const ScrollButton = styled.button`
    display: grid;
    place-items: center;
    height: 20px;
    border-bottom: 1px solid #505050;
    background: linear-gradient(#e8e8e8, #c4c4c4);
`

const ScrollTrack = styled.div`
    flex: 1;
    padding: 3px 0 2px;
    background-color: #8c8c8c;
`

const ScrollThumb = styled.div`
    display: flex;
    flex-direction: column;
    align-items: center;
    justify-content: center;
    gap: 1px;
    height: 100%;
    border: 1px solid #e0e0e0;
    border-radius: 7px;
    background-color: #b8b8b8;
    i{
        width: 6px;
        height: 1px;
        background-color: #606060;
    }
`

const OutputTabs = styled.div`
    height: 21px;
    border-bottom: 1px solid #b0b0b0;
    span{
        display: block;
        width: 268px;
        height: 20px;
        padding: 2px 7px;
        background-color: #f0f0f0;
    }
`

const BottomStrip = styled.div`
    flex: none;
    display: flex;
    gap: 6px;
    height: 6px;
    border-top: 2px solid #000000;
    background-color: #cfd0d6;
`

const BottomMain = styled.div`
    display: flex;
    gap: 93px;
    flex: 1;
    padding-left: 2px;
    background: linear-gradient(90deg, #b8b8b8 148px, #f0f0f0 149px 20%, #bbbcc2 55%);
    i{
        width: 54px;
        background-color: #f0f0f0;
    }
    i + i{
        display: none;
    }
`

const BottomSide = styled.div`
    display: flex;
    width: 296px;
    background-color: #bbbcc2;
    i{
        width: 82px;
        background-color: #d0d0d0;
    }
    i + i{
        width: 92px;
        background-color: #f0f0f0;
    }
`

const SidePane = styled.aside`
    display: flex;
    flex-direction: column;
    flex: none;
    width: 296px;
    border-left: 1px solid #000000;
    background-color: #bbbcc2;
`

const SideBody = styled.div`
    flex: 1;
    display: flex;
    flex-direction: column;
    padding: 12px 8px 12px 11px;
`

const LayerList = styled.table`
    display: block;
    flex: 1;
    border: 2px solid;
    border-color: #000000 #f4f4f4 #f4f4f4 #000000;
    background-color: #ffffff;
    border-spacing: 0;
    cursor: default;
`

const LayerRow = styled.tr`
    td{
        height: 19px;
        padding: 0;
        border-bottom: 1px dashed #c0c0c0;
        border-right: 1px dashed #c0c0c0;
        vertical-align: middle;
    }
    td:first-child{
        width: 19px;
        padding-left: 3px;
        background-color: ${({ $active }) => ($active ? '#8cb4e8' : '#ffffff')};
    }
    td:nth-child(2){
        width: 234px;
        padding-left: 2px;
        line-height: 18px;
        color: ${({ $active }) => ($active ? '#ffffff' : '#000000')};
        background-color: ${({ $active, $shaded }) => ($active ? '#0000ff' : $shaded ? '#e8e8e8' : '#ffffff')};
    }
    td:last-child{
        width: 19px;
        padding-left: 3px;
    }
`

const Swatch = styled.span`
    display: block;
    width: 12px;
    height: 12px;
    background-color: ${({ $color }) => $color};
`

const ActiveOnly = styled.div`
    margin: 9px 0;
`

const ChoiceLabel = styled.label`
    display: flex;
    align-items: center;
    gap: 6px;
    height: 16px;
    white-space: nowrap;
`

const Radio = styled.input`
    appearance: none;
    flex: none;
    width: 13px;
    height: 13px;
    margin: 0;
    border: 1px solid #c4c4c4;
    border-bottom: 2px solid #8c8c8c;
    border-radius: 50%;
    background: linear-gradient(#eeeeee, #ffffff);
    &:checked{
        background: radial-gradient(circle at 50% 50%, #cc0000 0 3px, #ffffff 4px);
    }
`

const Check = styled.input`
    appearance: none;
    display: grid;
    place-items: center;
    flex: none;
    width: 13px;
    height: 13px;
    margin: 0;
    border: 1px solid #cfcfcf;
    border-bottom: 2px solid #969696;
    border-radius: 2px;
    background: linear-gradient(#ececec, #ffffff);
    &:checked::before{
        content: '';
        width: 9px;
        height: 9px;
        background-color: #cc0000;
        clip-path: polygon(0 38%, 22% 34%, 42% 62%, 88% 0, 100% 4%, 44% 100%, 32% 96%);
    }
`

const Group = styled.fieldset`
    min-width: 0;
    margin: 0;
    padding: 0 6px;
    border: 1px solid #bcbcbc;
    border-radius: 6px;
    legend{
        padding: 0 2px;
        line-height: 17px;
        color: #d00010;
    }
`

const ColorGroup = styled(Group)`
    width: 186px;
    height: 59px;
    border-color: #989898;
`

const ColorRow = styled.div`
    display: grid;
    grid-template-columns: 79px auto;
    padding: 13px 0 0 6px;
`

const ShapeButtons = styled.div`
    display: flex;
    gap: 3px;
    margin-top: 9px;
`

const ShapeButton = styled.button`
    display: grid;
    place-items: center;
    width: 29px;
    height: 26px;
    border: 1px solid #8c8c8c;
    border-radius: 9px;
    background: ${({ $raised }) => ($raised ? 'linear-gradient(#f4f4f4, #b4b4b4)' : 'linear-gradient(#b4b4b4, #f4f4f4)')};
`

const Dialog = styled.div`
    position: absolute;
    top: 103px;
    right: 419px;
    bottom: 7px;
    left: 75px;
    display: flex;
    flex-direction: column;
    border: 1px solid #606060;
    background-color: #efefef;
    box-shadow: 0 4px 16px rgba(0, 0, 0, 0.35);
`

const DialogTitle = styled.header`
    display: flex;
    align-items: center;
    gap: 6px;
    flex: none;
    height: 37px;
    padding: 0 15px 2px 8px;
    background-color: #ffffff;
    h1{
        font-size: 15px;
        font-weight: 400;
        line-height: 20px;
    }
`

const CloseButton = styled.button`
    margin-left: auto;
`

const DialogBody = styled.div`
    flex: 1;
    min-height: 0;
    display: flex;
    flex-direction: column;
    gap: 9px;
    padding: 12px 14px 0 13px;
`

const AffixRow = styled.div`
    display: grid;
    grid-template-columns: 207px 207px minmax(0, 1fr);
    align-items: center;
    height: 42px;
    padding: 2px 5px 0 6px;
`

const ApplyTo = styled.label`
    display: flex;
    align-items: center;
    span:first-child{
        width: 56px;
    }
`

const Columns = styled.div`
    flex: 1;
    min-height: 0;
    display: flex;
    gap: 8px;
`

const LeftColumn = styled.div`
    display: flex;
    flex-direction: column;
    gap: 9px;
    width: 399px;
    & > ${Group}{
        flex: 1;
        display: flex;
        flex-direction: column;
    }
`

const TablePad = styled.div`
    height: 100%;
    padding: 12px 5px 9px 6px;
`

const TableFrame = styled.div`
    height: 100%;
    border: 2px solid #202020;
    background-color: #ffffff;
    ${({ $sunken }) => $sunken && css`
        border-color: #202020 #f8f8f8 #f8f8f8 #202020;
    `}
`

const Table = styled.table`
    width: 100%;
    padding-right: 2px;
    table-layout: fixed;
    border-spacing: 0;
    th{
        height: 18px;
        padding: 0 0 0 1px;
        font-weight: 400;
        text-align: left;
        line-height: 18px;
        white-space: nowrap;
        background: linear-gradient(#7c7c7c, #7c7c7c) right 2px / 1px 16px no-repeat, linear-gradient(#cccccc, #a0a0a0);
    }
`

const CircuitRow = styled.tr`
    color: ${({ $selected }) => ($selected ? '#f4f4f4' : '#000000')};
    background-color: ${({ $selected, $shaded }) => ($selected ? '#808080' : $shaded ? '#e8e8e8' : '#ffffff')};
    td{
        height: 15px;
        padding: 0 0 0 3px;
        line-height: 14px;
        white-space: nowrap;
        overflow: hidden;
        border-right: 1px solid ${({ $selected }) => ($selected ? '#808080' : '#cccccc')};
        border-bottom: 1px solid ${({ $selected }) => ($selected ? '#808080' : '#cccccc')};
    }
`

const ConnectionGroup = styled(Group)`
    flex: 1;
    display: flex;
    flex-direction: column;
    padding: 0 2px 0 6px;
    border-bottom: 0;
`

const MethodRow = styled.div`
    display: grid;
    grid-template-columns: 147px 136px auto;
    padding: 3px 0 0 1px;
`

const SizeRow = styled.div`
    display: flex;
    gap: 10px;
    margin-top: 12px;
    padding-left: 3px;
`

const SizeField = styled.label`
    display: flex;
    align-items: center;
    & > span:first-child{
        width: ${({ $label }) => $label}px;
    }
`

const TextInput = styled.input`
    width: ${({ $width }) => $width}px;
    height: 19px;
    padding: 0 3px;
    border: 1px solid #d0d0d0;
    border-top: 2px solid #989898;
    border-radius: 3px;
    background-color: #ffffff;
    outline: none;
`

const ConflictGroup = styled(Group)`
    height: 130px;
    margin: 22px 8px 0 3px;
`

const ConflictList = styled.div`
    display: grid;
    gap: 14px;
    padding: 0 0 0 2px;
`

const PreviewRow = styled.div`
    display: flex;
    align-items: center;
    gap: 20px;
    margin-top: 29px;
    padding-left: 5px;
`

const TickGrid = styled.div`
    display: grid;
    grid-template-columns: 119px auto;
    row-gap: 2px;
`

const PinFrame = styled(TableFrame)`
    flex: 1;
    height: auto;
    margin: 8px 0 0 1px;
`

const DialogFooter = styled.footer`
    display: flex;
    justify-content: flex-end;
    gap: 9px;
    padding: 12px 164px 14px 0;
`

const PushButton = styled.button`
    flex: none;
    width: ${({ $width }) => $width}px;
    height: 20px;
    border: 1px solid ${({ $primary }) => ($primary ? '#b06060' : '#b4b4b4')};
    border-bottom: 2px solid ${({ $primary }) => ($primary ? '#905050' : '#8c8c8c')};
    border-radius: 10px;
    font-weight: ${({ $primary }) => ($primary ? 700 : 400)};
    color: ${({ $primary }) => ($primary ? '#ffffff' : '#000000')};
    white-space: nowrap;
    background: ${({ $primary }) => ($primary ? 'linear-gradient(#cc0000, #a00000)' : 'linear-gradient(#fafafa, #c8c8c8)')};
`
